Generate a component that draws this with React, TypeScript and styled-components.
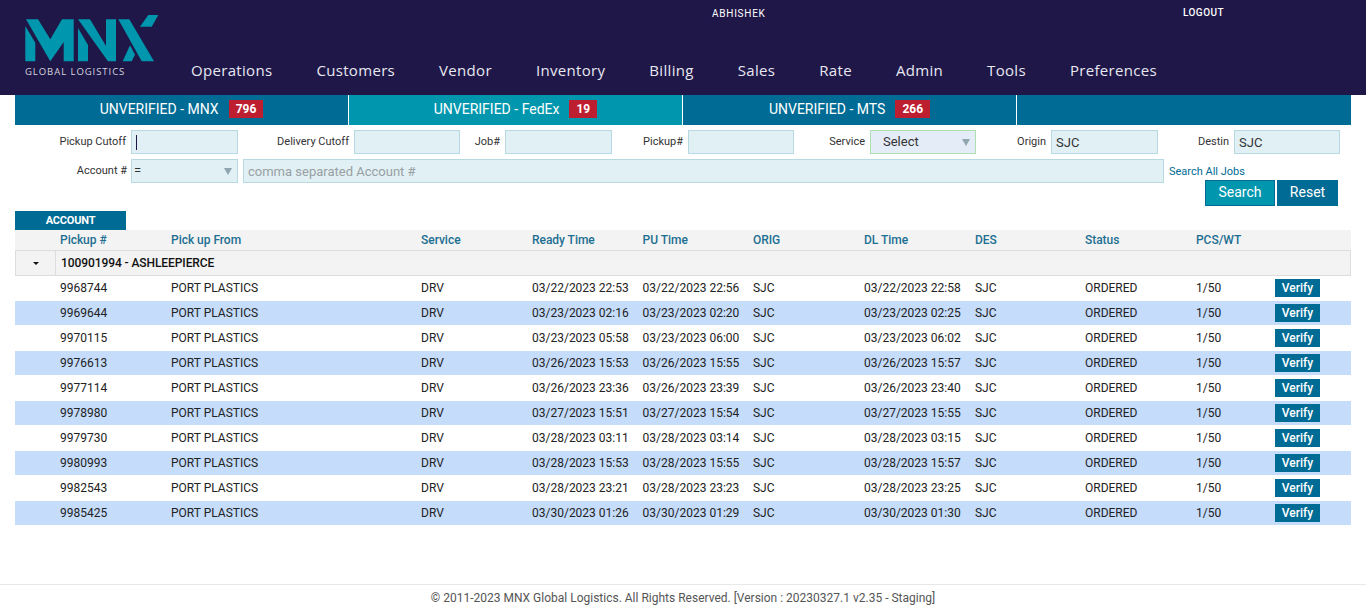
import React from 'react'
import styled, { createGlobalStyle } from 'styled-components'

const GlobalStyle = createGlobalStyle`
  html, body {
    margin: 0;
    padding: 0;
    background: #fff;
    font-family: Roboto, "Liberation Sans", sans-serif;
    color: #222;
  }
`

const Page = styled.div`
  width: 1366px;
  height: 612px;
  display: flex;
  flex-direction: column;
  overflow: hidden;
`

const Header = styled.header`
  height: 95px;
  flex: none;
  background: #1f1748;
  display: flex;
  color: #fff;
`

const Brand = styled.div`
  width: 191px;
  flex: none;
  padding: 14px 0 0 25px;
  box-sizing: border-box;
`

const BrandName = styled.div`
  margin-top: 4px;
  font-family: "Open Sans", sans-serif;
  font-size: 9.5px;
  line-height: 11px;
  letter-spacing: 0.95px;
  color: #d5d5de;
  white-space: nowrap;
`

const HeaderMain = styled.div`
  flex: 1;
  display: flex;
  flex-direction: column;
  justify-content: space-between;
`

const UserRow = styled.div`
  height: 24px;
  position: relative;
  font-size: 10px;
  line-height: 27px;
`

const UserName = styled.span`
  position: absolute;
  left: 521px;
  letter-spacing: 0.75px;
`

const Logout = styled.span`
  position: absolute;
  left: 992px;
  font-weight: 500;
  line-height: 25px;
  letter-spacing: 0.45px;
`

const Nav = styled.nav`
  display: flex;
  gap: 44px;
  padding-bottom: 15px;
`

const NavLink = styled.a`
  font-family: "Open Sans", sans-serif;
  font-size: 15px;
  line-height: 20px;
  letter-spacing: 0.32px;
  color: #e8e8f0;
`

const Tabs = styled.div`
  margin: 0 15px;
  height: 30px;
  flex: none;
  display: grid;
  grid-template-columns: repeat(4, 334px);
`

const Tab = styled.div<{ $active?: boolean }>`
  background: ${p => (p.$active ? '#0097ae' : '#006b94')};
  border-right: 1px solid #fff;
  color: #fff;
  font-size: 14px;
  display: flex;
  align-items: center;
  justify-content: center;
  gap: 10px;
  padding-bottom: 2px;
  box-sizing: border-box;
  &:last-child {
    border-right: 0;
  }
`

const Count = styled.span`
  background: #bd1e30;
  font-size: 12px;
  font-weight: 700;
  padding: 0 7px;
  line-height: 18px;
`

const SearchForm = styled.form`
  height: 86px;
  flex: none;
  padding: 5px 26px 0 15px;
  box-sizing: border-box;
  position: relative;
  margin: 0;
`

const FilterRow = styled.div`
  display: grid;
  grid-template-columns: 116px 107px 116px 106px 45px 107px 76px 106px 76px 106px 75px 107px 76px 106px;
  height: 24px;
  margin-bottom: 5px;
  align-items: stretch;
`

const AccountRow = styled.div`
  display: grid;
  grid-template-columns: 116px 107px 926px auto;
  height: 24px;
`

const FieldLabel = styled.label`
  font-size: 11px;
  line-height: 23px;
  text-align: right;
  padding-right: 5px;
  color: #333;
  white-space: nowrap;
`

const AccountLabel = styled(FieldLabel)`
  padding-right: 4px;
`

const TextInput = styled.div<{ $muted?: boolean; $wide?: boolean }>`
  box-sizing: border-box;
  height: 24px;
  background: #e0f0f4;
  border: 1px solid #b6d9e2;
  font-size: 13px;
  line-height: 24px;
  padding-left: 4px;
  color: ${p => (p.$muted ? '#9a9fa3' : '#333')};
  margin-left: ${p => (p.$wide ? '5px' : '0')};
  position: relative;
`

const Caret = styled.span`
  display: inline-block;
  width: 1px;
  height: 15px;
  background: #1f1748;
  vertical-align: -3px;
`

const SelectBox = styled(TextInput)<{ $service?: boolean }>`
  background: ${p => (p.$service ? '#e4ecf7' : '#e0f0f4')};
  border-color: ${p => (p.$service ? '#ace0ae' : '#b6d9e2')};
  padding-left: ${p => (p.$service ? '12px' : '2px')};
  line-height: 22px;
  &::after {
    content: '';
    position: absolute;
    right: 5px;
    top: 8px;
    border-left: 4px solid transparent;
    border-right: 4px solid transparent;
    border-top: 7px solid #8fa5b0;
  }
`

const AllJobs = styled.a`
  font-size: 11px;
  line-height: 25px;
  color: #006b94;
  padding-left: 5px;
  white-space: nowrap;
`

const Actions = styled.div`
  position: absolute;
  left: 1205px;
  top: 55px;
  display: flex;
  gap: 2px;
`

const ActionButton = styled.button<{ $primary?: boolean }>`
  box-sizing: border-box;
  height: 26px;
  width: ${p => (p.$primary ? '70px' : '61px')};
  border: 1px solid #006b94;
  background: ${p => (p.$primary ? '#0097ae' : '#006b94')};
  color: #fff;
  font-family: inherit;
  font-size: 14px;
  padding: 0 0 2px;
`

const GroupTab = styled.div`
  margin-left: 15px;
  width: 111px;
  height: 19px;
  flex: none;
  background: #006b94;
  color: #fff;
  font-size: 11px;
  font-weight: 700;
  line-height: 19px;
  text-align: center;
  letter-spacing: -0.2px;
`

const Table = styled.div`
  margin: 0 15px;
  width: 1336px;
  flex: none;
`

const columns = '40px 111px 250px 111px 110.6px 110.4px 111px 111px 110px 111px 79px auto'

const HeadRow = styled.div`
  display: grid;
  grid-template-columns: ${columns};
  height: 21px;
  background: #f3f3f3;
  border-bottom: 1px solid #ddd;
  box-sizing: border-box;
  font-size: 12px;
  font-weight: 500;
  line-height: 20px;
  letter-spacing: -0.03px;
  color: #1d6f92;
`

const HeadCell = styled.div`
  padding-left: 5px;
`

const GroupRow = styled.div`
  display: grid;
  grid-template-columns: 40px 1fr;
  height: 25px;
  box-sizing: border-box;
  background: #f3f3f3;
  border: 1px solid #ddd;
  border-top: 0;
  font-size: 12px;
  font-weight: 500;
  line-height: 24px;
  letter-spacing: -0.08px;
  color: #111;
`

const Toggle = styled.div`
  border-right: 1px solid #ddd;
  position: relative;
  &::after {
    content: '';
    position: absolute;
    left: 17px;
    top: 11px;
    border-left: 3px solid transparent;
    border-right: 3px solid transparent;
    border-top: 3px solid #111;
  }
`

const GroupTitle = styled.div`
  padding-left: 5px;
`

const DataRow = styled.div<{ $alt: boolean }>`
  display: grid;
  grid-template-columns: ${columns};
  height: 25px;
  box-sizing: border-box;
  border-bottom: 1px solid #fff;
  align-items: center;
  background: ${p => (p.$alt ? '#c5dcfb' : '#fff')};
  font-size: 12px;
  color: #222;
`

const Cell = styled.div`
  padding-left: 5px;
  white-space: nowrap;
`

const VerifyCell = styled.div`
  padding-left: 5px;
  display: flex;
`

const VerifyButton = styled.button`
  width: 45px;
  height: 18px;
  border: 0;
  padding: 0;
  background: #006b94;
  color: #fff;
  font-family: inherit;
  font-size: 12px;
  font-weight: 500;
  line-height: 18px;
`

const Footer = styled.footer`
  margin-top: auto;
  height: 28px;
  flex: none;
  border-top: 1px solid #e8e8e8;
  box-sizing: border-box;
  font-size: 12px;
  line-height: 26px;
  text-align: center;
  color: #555;
`

const navItems = ['Operations', 'Customers', 'Vendor', 'Inventory', 'Billing', 'Sales', 'Rate', 'Admin', 'Tools', 'Preferences']

const heads = ['Pickup #', 'Pick up From', 'Service', 'Ready Time', 'PU Time', 'ORIG', 'DL Time', 'DES', 'Status', 'PCS/WT']

const rows = [
  ['9968744', '03/22/2023 22:53', '03/22/2023 22:56', '03/22/2023 22:58'],
  ['9969644', '03/23/2023 02:16', '03/23/2023 02:20', '03/23/2023 02:25'],
  ['9970115', '03/23/2023 05:58', '03/23/2023 06:00', '03/23/2023 06:02'],
  ['9976613', '03/26/2023 15:53', '03/26/2023 15:55', '03/26/2023 15:57'],
  ['9977114', '03/26/2023 23:36', '03/26/2023 23:39', '03/26/2023 23:40'],
  ['9978980', '03/27/2023 15:51', '03/27/2023 15:54', '03/27/2023 15:55'],
  ['9979730', '03/28/2023 03:11', '03/28/2023 03:14', '03/28/2023 03:15'],
  ['9980993', '03/28/2023 15:53', '03/28/2023 15:55', '03/28/2023 15:57'],
  ['9982543', '03/28/2023 23:21', '03/28/2023 23:23', '03/28/2023 23:25'],
  ['9985425', '03/30/2023 01:26', '03/30/2023 01:29', '03/30/2023 01:30']
]

const Logo = () => (
  <svg width="134" height="48" viewBox="25 14 134 48" style={{ display: 'block' }}>
    <g fill="#0097ae">
      <path d="M25.3 26L35.3 42.7V61.3H25.3Z" />
      <path d="M26 19.3H38L50.3 39.3L62 19.3H73.7V61.3H63.7V42L50.3 61.3Z" />
      <path d="M78 28L88 45V61.3H78Z" />
      <path d="M78 19.3H90L106 46V19.3H116V61.3H108Z" />
      <path d="M118.3 19.3H129.3L154 61.3H141.7Z" />
      <path d="M122.7 61.3L130 45.3L135 54.7L131.7 61.3Z" />
      <path d="M140 26.7L148.3 15H158.3L151.7 26.7Z" />
    </g>
  </svg>
)

export default function App() {
  return (
    <Page>
      <GlobalStyle />
      <Header>
        <Brand>
          <Logo />
          <BrandName>GLOBAL LOGISTICS</BrandName>
        </Brand>
        <HeaderMain>
          <UserRow>
            <UserName>ABHISHEK</UserName>
            <Logout>LOGOUT</Logout>
          </UserRow>
          <Nav>
            {navItems.map(item => (
              <NavLink key={item}>{item}</NavLink>
            ))}
          </Nav>
        </HeaderMain>
      </Header>
      <Tabs>
        <Tab>UNVERIFIED - MNX <Count>796</Count></Tab>
        <Tab $active>UNVERIFIED - FedEx <Count>19</Count></Tab>
        <Tab>UNVERIFIED - MTS <Count>266</Count></Tab>
        <Tab />
      </Tabs>
      <SearchForm>
        <FilterRow>
          <FieldLabel>Pickup Cutoff</FieldLabel>
          <TextInput><Caret /></TextInput>
          <FieldLabel>Delivery Cutoff</FieldLabel>
          <TextInput />
          <FieldLabel>Job#</FieldLabel>
          <TextInput />
          <FieldLabel>Pickup#</FieldLabel>
          <TextInput />
          <FieldLabel>Service</FieldLabel>
          <SelectBox $service>Select</SelectBox>
          <FieldLabel>Origin</FieldLabel>
          <TextInput>SJC</TextInput>
          <FieldLabel>Destin</FieldLabel>
          <TextInput>SJC</TextInput>
        </FilterRow>
        <AccountRow>
          <AccountLabel>Account #</AccountLabel>
          <SelectBox>=</SelectBox>
          <TextInput $muted $wide>comma separated Account #</TextInput>
          <AllJobs>Search All Jobs</AllJobs>
        </AccountRow>
        <Actions>
          <ActionButton type="button" $primary>Search</ActionButton>
          <ActionButton type="button">Reset</ActionButton>
        </Actions>
      </SearchForm>
      <GroupTab>ACCOUNT</GroupTab>
      <Table>
        <HeadRow>
          <div />
          {heads.map(head => (
            <HeadCell key={head}>{head}</HeadCell>
          ))}
        </HeadRow>
        <GroupRow>
          <Toggle />
          <GroupTitle>100901994 - ASHLEEPIERCE</GroupTitle>
        </GroupRow>
        {rows.map((row, i) => (
          <DataRow key={row[0]} $alt={i % 2 === 1}>
            <div />
            <Cell>{row[0]}</Cell>
            <Cell>PORT PLASTICS</Cell>
            <Cell>DRV</Cell>
            <Cell>{row[1]}</Cell>
            <Cell>{row[2]}</Cell>
            <Cell>SJC</Cell>
            <Cell>{row[3]}</Cell>
            <Cell>SJC</Cell>
            <Cell>ORDERED</Cell>
            <Cell>1/50</Cell>
            <VerifyCell><VerifyButton type="button">Verify</VerifyButton></VerifyCell>
          </DataRow>
        ))}
      </Table>
      <Footer>© 2011-2023 MNX Global Logistics. All Rights Reserved. [Version : 20230327.1 v2.35 - Staging]</Footer>
    </Page>
  )
}
